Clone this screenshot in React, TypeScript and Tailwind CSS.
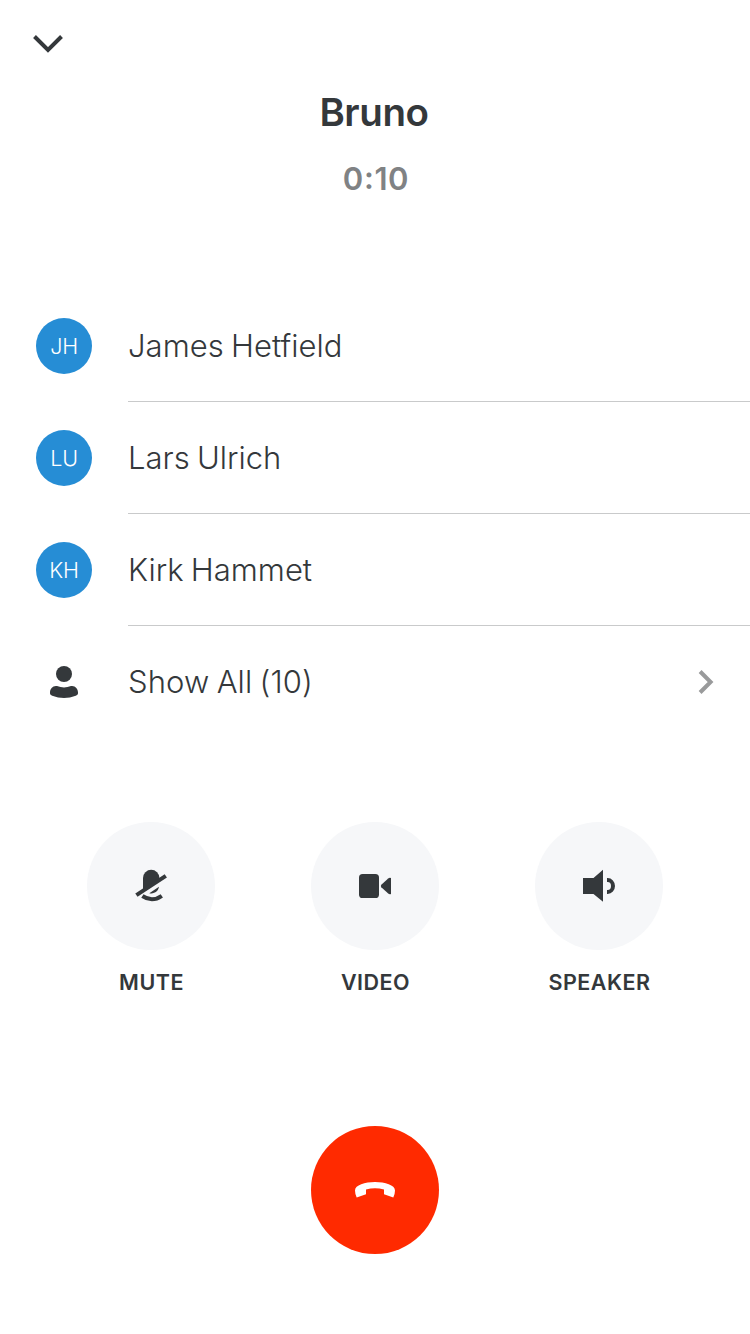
import type { ReactNode } from 'react';

const participants = [
  { initials: 'JH', name: 'James Hetfield', spacing: 'tracking-[0.02px]' },
  { initials: 'LU', name: 'Lars Ulrich', spacing: 'tracking-[0px]' },
  { initials: 'KH', name: 'Kirk Hammet', spacing: 'tracking-[0px]' },
];

function MuteIcon() {
  return (
    <svg width="60" height="60" viewBox="1 1 60 60" fill="#34383b">
      <path d="M23 36V23a8.2 8.2 0 0 1 16.4 0V24.5Z" />
      <path d="M16.4 40.1 45.8 20.9" stroke="#34383b" strokeWidth="4.1" />
      <path d="M29.3 38.2 39 31.8C38.5 36 34 39.4 29.3 38.2Z" />
      <path d="M22.4 41Q32 47.6 41.8 40.8" fill="none" stroke="#34383b" strokeWidth="4" />
    </svg>
  );
}

function VideoIcon() {
  return (
    <svg width="60" height="60" viewBox="0 1 60 60" fill="#34383b">
      <rect x="14" y="19" width="20" height="24" rx="3.6" />
      <path d="M36.3 29.8 43.2 23.4Q44.4 22.5 46 23V39Q44.4 39.5 43.2 38.6L36.3 32.2Q35.3 31 36.3 29.8Z" />
    </svg>
  );
}

function SpeakerIcon() {
  return (
    <svg width="60" height="60" viewBox="-1 1 60 60" fill="#34383b">
      <path d="M13 23H23.5L33 14.8V46.8L23.5 39H13Z" />
      <path d="M37 25H37.6A5.4 6 0 0 1 37.6 37H37" fill="none" stroke="#34383b" strokeWidth="4" />
    </svg>
  );
}

function Row({ icon, children, last = false }: { icon: ReactNode; children: ReactNode; last?: boolean }) {
  return (
    <li className="flex h-28 pl-9">
      <div className="flex w-14 shrink-0 items-center justify-center">{icon}</div>
      <div
        className={
          last
            ? 'ml-9 flex flex-1 items-center justify-between pr-9'
            : 'ml-9 flex flex-1 items-center border-b border-[#c9cacb] pt-px'
        }
      >
        {children}
      </div>
    </li>
  );
}

function Control({ icon, label }: { icon: ReactNode; label: string }) {
  return (
    <div className="flex w-32 flex-col items-center">
      <button className="flex size-32 items-center justify-center rounded-full bg-[#f6f7f9]" aria-label={label}>
        {icon}
      </button>
      <span className="mt-4 pl-px text-[21.5px] leading-8 font-[560] tracking-[0.5px]">{label}</span>
    </div>
  );
}

export default function App() {
  return (
    <main className="flex h-[1334px] w-[750px] flex-col overflow-hidden bg-white font-['Inter',sans-serif] text-[#34383b]">
      <header className="flex h-[290px] flex-col items-center pt-6">
        <button className="ml-7 self-start" aria-label="Minimize">
          <svg width="40" height="40" viewBox="0 0 40 40" fill="none">
            <path d="M6.5 12.5 20 26 33.5 12.5" stroke="#34383b" strokeWidth="4" />
          </svg>
        </button>
        <h1 className="mt-6 pr-0.5 text-[38.5px] leading-[48px] font-[580] tracking-[-0.4px]">Bruno</h1>
        <p className="mt-[23px] pl-0.5 text-[31px] leading-10 font-semibold tracking-[0.6px] text-[#808284]">
          0<span className="inline-block -translate-y-px">:</span>10
        </p>
      </header>

      <ul>
        {participants.map((p) => (
          <Row
            key={p.initials}
            icon={
              <span className="flex size-14 items-center justify-center rounded-full bg-[#268dd5] text-[21.5px] font-light tracking-[-0.2px] text-white">
                {p.initials}
              </span>
            }
          >
            <span className={`text-[31px] leading-10 font-light [word-spacing:-1.5px] ${p.spacing}`}>{p.name}</span>
          </Row>
        ))}
        <Row
          last
          icon={
            <svg width="56" height="56" viewBox="0 0 56 56" fill="#34383b">
              <circle cx="28" cy="20" r="8" />
              <path d="M14 38.5C14 34.5 17 31.3 21 32Q28 34.8 35 32C39 31.3 42 34.5 42 38.5V39.5Q42 41 39.8 41.8Q28 46.2 16.2 41.8Q14 41 14 39.5Z" />
            </svg>
          }
        >
          <span className="text-[31px] leading-10 font-light tracking-[0.1px] [word-spacing:-1.5px]">Show All (10)</span>
          <svg width="18" height="28" viewBox="0 0 18 28" fill="none">
            <path d="M4.1 3.5 14.6 14 4.1 24.5" stroke="#999a9b" strokeWidth="4" />
          </svg>
        </Row>
      </ul>

      <section className="mt-[84px] flex justify-between px-[87px]">
        <Control icon={<MuteIcon />} label="MUTE" />
        <Control icon={<VideoIcon />} label="VIDEO" />
        <Control icon={<SpeakerIcon />} label="SPEAKER" />
      </section>

      <footer className="mt-32 flex justify-center">
        <button className="flex size-32 items-center justify-center rounded-full bg-[#ff2a00]" aria-label="End call">
          <svg width="70" height="60" viewBox="0 0 70 60" fill="white">
            <path d="M15 30.5C15 25 25 22 35 22S55 25 55 30.5Q55 34 53.3 37.6L44 34.2V29.5Q35 26.8 26 29.5V34.2L16.7 37.6Q15 34 15 30.5Z" />
          </svg>
        </button>
      </footer>
    </main>
  );
}
